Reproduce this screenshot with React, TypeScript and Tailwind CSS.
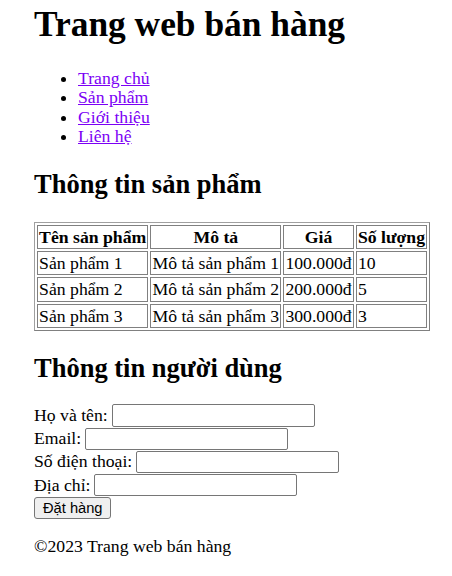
const products = [
  { name: 'Sản phẩm 1', desc: 'Mô tả sản phẩm 1', price: '100.000đ', qty: '10' },
  { name: 'Sản phẩm 2', desc: 'Mô tả sản phẩm 2', price: '200.000đ', qty: '5' },
  { name: 'Sản phẩm 3', desc: 'Mô tả sản phẩm 3', price: '300.000đ', qty: '3' },
];

const navLinks = ['Trang chủ', 'Sản phẩm', 'Giới thiệu', 'Liên hệ'];

const fields = ['Họ và tên:', 'Email:', 'Số điện thoại:', 'Địa chỉ:'];

const cell = 'border border-[#808080] p-[1.1px] leading-[20.1px]';

export default function App() {
  return (
    <div className="min-h-[576px] bg-white pl-[34px] pt-[3px] text-black text-[17.7px] leading-[19.6px] font-['Liberation_Serif',serif]">
      <header>
        <h1 className="text-[35.4px] font-bold leading-[normal]">Trang web bán hàng</h1>
        <nav>
          <ul className="list-disc pl-[44px] mt-[23.6px] mb-[17.6px]">
            {navLinks.map((link) => (
              <li key={link}>
                <a href="#" className="text-[#7b00f5] underline">{link}</a>
              </li>
            ))}
          </ul>
        </nav>
      </header>

      <main>
        <section>
          <h2 className="text-[26.5px] font-bold leading-[normal] my-[21.9px]">Thông tin sản phẩm</h2>
          <table className="border-separate border-spacing-[2.2px] border border-[#808080] border-t-[#a0a0a0] border-l-[#a0a0a0]">
            <thead>
              <tr>
                {['Tên sản phẩm', 'Mô tả', 'Giá', 'Số lượng'].map((h) => (
                  <th key={h} className={`${cell} font-bold text-center`}>{h}</th>
                ))}
              </tr>
            </thead>
            <tbody>
              {products.map((p) => (
                <tr key={p.name}>
                  <td className={cell}>{p.name}</td>
                  <td className={cell}>{p.desc}</td>
                  <td className={cell}>{p.price}</td>
                  <td className={cell}>{p.qty}</td>
                </tr>
              ))}
            </tbody>
          </table>
        </section>

        <section>
          <h2 className="text-[26.5px] font-bold leading-[normal] mt-[21.9px] mb-[20px]">Thông tin người dùng</h2>
          <form onSubmit={(e) => e.preventDefault()}>
            {fields.map((f) => (
              <label key={f} className="flex items-center gap-[4px] h-[23.3px]">
                <span>{f}</span>
                <input
                  type="text"
                  className="w-[203px] h-[22.3px] border border-[#767676] rounded-[2px] bg-white px-[2px] text-[14.67px] font-['Liberation_Sans',sans-serif]"
                />
              </label>
            ))}
            <button
              type="submit"
              className="h-[22.5px] px-[8px] border border-[#767676] rounded-[3px] bg-[#efefef] text-[14.67px] leading-none text-black font-['Liberation_Sans',sans-serif]"
            >
              Đặt hàng
            </button>
          </form>
        </section>
      </main>

      <footer>
        <p className="my-[17.6px]">©2023 Trang web bán hàng</p>
      </footer>
    </div>
  );
}
